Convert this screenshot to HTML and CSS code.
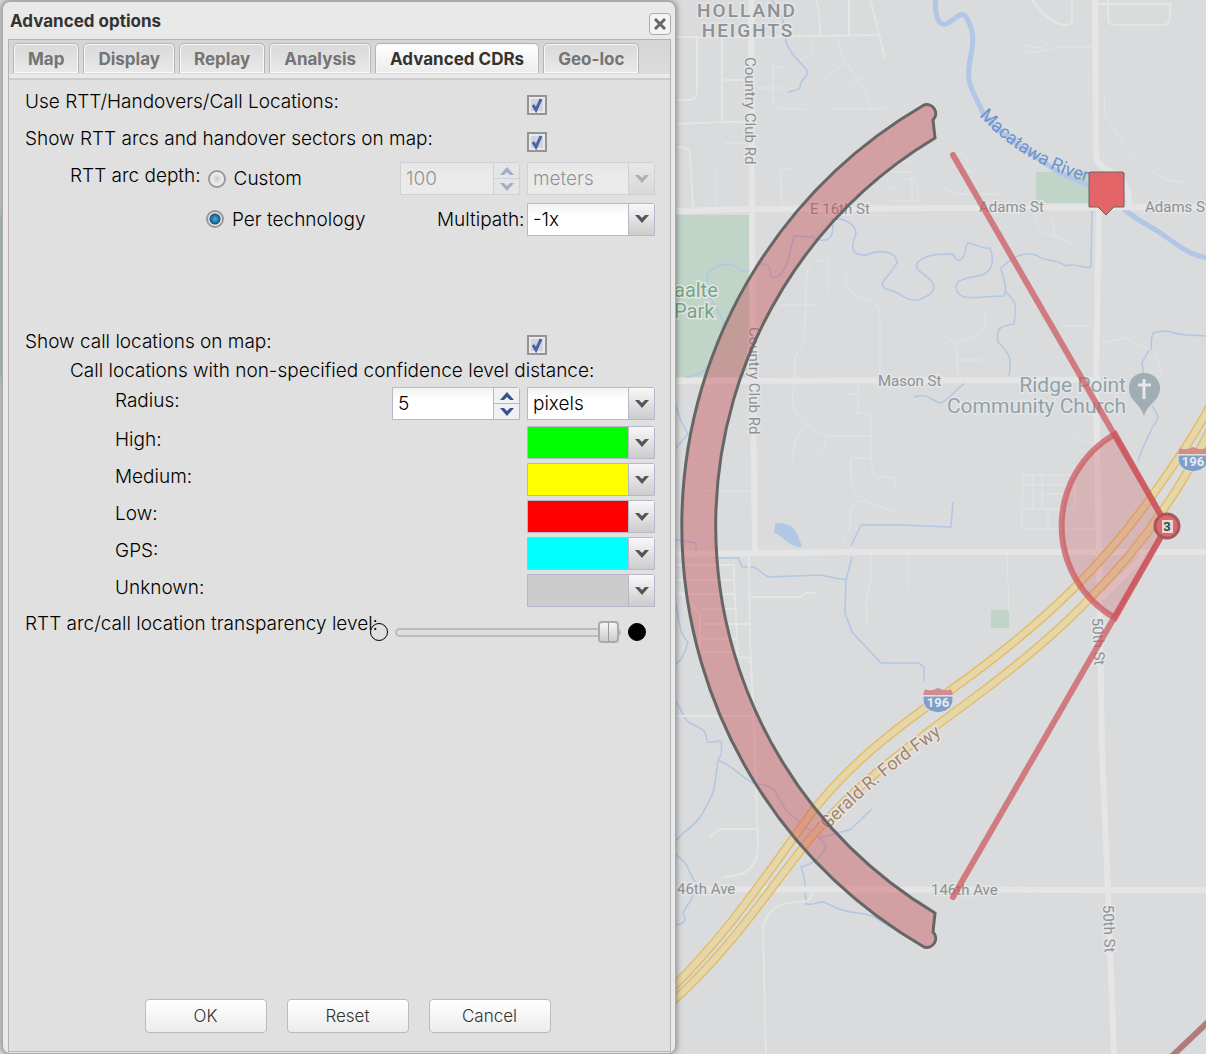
FILE: index.html
```
<!DOCTYPE html>
<html lang="en">
<head>
  <meta charset="UTF-8">
  <meta name="viewport" content="width=device-width, initial-scale=1.0">
  <title>Advanced options</title>
  <link rel="stylesheet" href="styles.css">
</head>
<body>
  <svg class="map" viewBox="0 0 1206 1054" preserveAspectRatio="xMinYMin slice" role="img" aria-label="Map">
    <!-- parks -->
    <g class="park">
      <path d="M0 215 H749 V377 H0z"/>
      <path d="M1036 172 H1100 V203 H1036z"/>
      <path d="M991 610 H1009 V628 H991z"/>
    </g>

    <!-- rivers and creeks -->
    <g class="water">
      <path class="river" d="M936 -4 C934 14 938 26 946 24 C956 20 960 10 966 17 C974 30 974 40 971 55 C967 75 968 82 974 94 L984 115 C1000 135 1030 152 1058 172 C1080 182 1105 190 1124 209 C1140 223 1152 226 1166 237 C1180 246 1190 256 1208 258"/>
      <path d="M772 0 L783 20 L786 42 C792 58 800 60 808 72 C806 80 800 78 800 88 C796 92 790 89 789 93"/>
      <path d="M707 292 V275 C712 267 722 264 732 264 C740 268 736 273 748 271 L760 264 C772 264 770 271 771 277 C780 280 787 268 790 252 L794 236 L812 237 C822 242 832 243 833 228 L832 219 C845 217 856 225 856 234 C850 248 852 256 866 255 C880 249 896 251 897 263 C890 276 876 284 886 289 C900 291 905 302 918 300 C930 296 938 290 932 282 C924 272 912 270 918 262 C926 254 940 254 953 254 C958 268 966 256 966 246 C970 238 978 250 990 248 C996 264 990 272 982 275 C970 278 952 278 957 291 C962 302 978 296 1004 296 C1008 285 1002 276 1001 268 C1014 256 1022 252 1036 255 C1044 262 1054 258 1066 266 C1076 262 1086 270 1091 267 L1092 211"/>
      <path d="M707 292 L724 322 L719 340 C712 370 700 376 686 377"/>
      <path d="M1006 292 C1018 304 1016 306 1014 324 C998 326 996 330 998 342 C1010 354 1012 358 1009 376"/>
      <path d="M914 397 C930 393 930 400 940 403 C950 400 952 392 965 383"/>
      <path d="M1151 350 C1152 330 1150 332 1168 331 C1180 336 1190 335 1208 336"/>
      <path d="M1149 350 L1142 363 L1144 378 M1152 406 C1160 418 1160 416 1152 428 L1142 450 L1138 461"/>
      <path d="M676 406 C680 420 681 422 688 434 L676 448 M676 540 L696 543 V550"/>
      <path d="M851 546 L861 525 L900 525 L951 527 L953 502 M718 558 H738 L742 567 H754 L768 577 L820 575 L840 579 H846 M852 557 L846 580 L845 613 L852 632 L881 663 H918 L924 667 V681"/>
      <path d="M676 604 C680 628 680 634 688 642 C684 655 682 660 676 664 M676 702 C684 712 682 718 690 723 C704 730 706 730 707 742 C714 744 720 738 722 743 C720 752 724 752 718 760 C714 790 716 790 702 814 C694 828 684 830 676 841"/>
      <path d="M718 760 C740 770 740 778 756 784 C780 784 776 800 788 812 C806 828 820 836 826 846 C820 860 812 864 801 867 C805 876 805 884 806 904 C818 906 818 898 830 905 C850 916 860 910 876 918 L892 928 M820 838 C834 834 846 830 850 830 L872 809"/>
      <path d="M676 855 C690 864 688 872 695 882 C696 900 686 904 683 913 C688 922 682 924 676 925"/>
      <path class="pond" d="M776 524 C794 523 796 532 801 546 C796 548 790 542 775 532z"/>
    </g>

    <!-- side streets -->
    <g class="street">
      <path class="wide" d="M676 37 H752 L879 35 M676 124 L722 122 H752 M697 37 V92 Q697 100 690 100 H676 M722 38 V122 M816 0 Q820 10 820 34 M849 0 V35 M870 0 Q876 20 879 35 L885 58 M724 80 H752 M676 147 Q690 146 690 156 L693 207 M1029 -4 C1044 16 1052 24 1066 25 Q1072 25 1072 18 V0 M1098 4 H1170 V18 Q1170 25 1162 25 H1114 Q1108 25 1108 18 V0"/>
      <path d="M773 62 V100 Q773 109 782 109 H805 M773 67 H786 M757 88 H783 M833 109 H875 L892 106 M838 38 Q840 56 850 68 Q870 95 871 108 M825 84 Q826 74 844 64 M850 87 L868 74 M716 167 V205 M724 143 H748 M782 205 L780 169 H793 M800 60 L812 55 V38 M1020 48 C1026 40 1034 52 1044 46 M1020 48 C1026 56 1040 52 1054 48 M1054 47 H1092 M1044 37 L1048 47"/>
      <path d="M800 350 L804 340 C806 310 806 300 806 285 C806 264 812 260 828 260 V292 M780 305 H816 M848 272 C840 284 850 290 858 298 C880 298 880 310 880 320 V376 M884 172 H912 V204 M890 130 C880 150 900 160 914 164 M884 190 Q898 190 904 180 Q916 174 918 190 V201 H890 M955 155 Q970 152 968 172 L976 170 M941 184 Q946 193 960 194 H1000 M1035 215 Q1036 236 1056 236 M1052 217 L1055 236 Q1078 244 1082 254 M1105 97 Q1102 112 1110 122 Q1130 160 1166 180 L1187 182 M1100 118 L1107 116 M1060 326 H1092 M1100 343 L1126 338 L1150 350 M941 333 L956 344 Q982 335 985 325 V313 M956 344 L958 376"/>
      <path d="M799 350 L795 358 V382 C790 404 792 410 806 424 C822 434 824 436 830 436 H871 M806 424 Q792 438 792 462 M827 436 Q826 444 820 454 M858 384 V414 M845 394 H858 M852 415 Q860 411 871 415 V458 Q872 477 877 477 H894 C896 492 896 492 901 495 M871 458 H851 V477 C852 490 858 494 860 500 M852 550 L843 542 Q842 536 850 530 V510 Q856 499 866 501 L896 513 M871 555 V580 L866 600 L867 624 M908 555 V588 M700 491 H750"/>
      <path d="M1023 475 H1075 V509 H1022z M1022 485 H1075 M1033 475 V509 M1042 475 V509 M1042 494 H1075 M1022 509 V529 H1096 M1048 509 V529 M1068 426 Q1080 444 1098 443 M1007 555 L1009 612 M1154 350 L1162 372 L1156 382 M956 360 H983"/>
      <path class="wide" d="M676 565 H734 V580 L738 657 L752 658 M676 580 H735 M676 594 H735 M700 609 H736 M702 624 H750 M702 639 H738 M702 652 H738 M749 556 L750 640 L755 750 L758 846 Q758 866 742 874 L722 878 M676 591 Q688 596 700 615 V650 M751 597 H800 L806 593 H816 M676 716 H752 M710 837 L720 829 H757 M813 891 Q812 902 800 902 Q764 902 763 932 L766 1056"/>
    </g>

    <!-- main roads -->
    <g class="road">
      <path d="M676 211 L752 209 L1206 207 M676 381 L1100 380 M676 554 L860 552 L1206 552 M676 889 L1206 890"/>
      <path d="M751 0 L753 380 L755 552"/>
      <path d="M1095 0 L1096 155 C1098 176 1128 166 1130 206 M1099 206 L1096 380 L1099 560 L1102 750 L1108 890 L1114 1056"/>
      <path d="M1097 602 L1144 556"/>
    </g>

    <!-- freeway, two carriageways -->
    <g class="freeway">
      <path class="edge" d="M1210 406 C1190 444 1170 470 1154 493 C1130 528 1104 558 1074 588 C1040 622 1000 655 948 692 C890 732 850 765 816 807 C775 862 730 932 672 988"/>
      <path class="edge" d="M1210 430 C1196 458 1180 486 1163 510 C1142 542 1118 570 1091 597 C1056 634 1014 668 971 700 C900 752 850 790 809 840 C765 895 730 950 672 1002"/>
      <path d="M1210 406 C1190 444 1170 470 1154 493 C1130 528 1104 558 1074 588 C1040 622 1000 655 948 692 C890 732 850 765 816 807 C775 862 730 932 672 988"/>
      <path d="M1210 430 C1196 458 1180 486 1163 510 C1142 542 1118 570 1091 597 C1056 634 1014 668 971 700 C900 752 850 790 809 840 C765 895 730 950 672 1002"/>
    </g>

    <!-- interstate shields -->
    <g id="shield">
      <path fill="#7f9fcb" stroke="#e3e6ea" stroke-width="1" d="M923 696 Q921 711 938 713 Q955 711 953 696z"/>
      <path fill="#d38b8f" d="M925 689 Q930 692 938 688 Q946 692 951 689 L953 695 H923z"/>
      <text class="shield-text" x="938" y="707">196</text>
    </g>
    <use href="#shield" x="255" y="-241"/>

    <!-- labels -->
    <g class="label">
      <text class="area" x="747" y="17">HOLLAND</text>
      <text class="area" x="748" y="37">HEIGHTS</text>
      <text class="green" x="674" y="297">aalte</text>
      <text class="green" x="674" y="318">Park</text>
      <text transform="translate(745 57) rotate(90)">Country Club Rd</text>
      <text transform="translate(749 327) rotate(90)">Country Club Rd</text>
      <text x="810" y="214">E 16th St</text>
      <text x="979" y="212">Adams St</text>
      <text x="1145" y="212">Adams St</text>
      <text x="878" y="386">Mason St</text>
      <text x="677" y="894">46th Ave</text>
      <text x="931" y="895">146th Ave</text>
      <text transform="translate(1092 618) rotate(87)">50th St</text>
      <text transform="translate(1103 905) rotate(88)">50th St</text>
      <text class="place" x="1126" y="392">Ridge Point</text>
      <text class="place" x="1126" y="413">Community Church</text>
      <path id="riverText" fill="none" d="M979 116 Q1030 170 1100 185"/>
      <text class="river-text"><textPath href="#riverText">Macatawa River</textPath></text>
      <path id="fwyText" fill="none" d="M828 830 Q880 775 960 722"/>
      <text class="fwy-text"><textPath href="#fwyText">Gerald R. Ford Fwy</textPath></text>
    </g>

    <!-- church pin -->
    <path fill="#a1adb4" d="M1144 373 C1134 373 1129 380 1129 388 C1129 401 1140 403 1144 416 C1148 403 1160 401 1160 388 C1160 380 1154 373 1144 373z"/>
    <path stroke="#e6e8e9" stroke-width="3" d="M1144 379 V399 M1138 385 H1151"/>

    <!-- RTT arc and handover sector -->
    <path class="arc" d="M924 105 A487 487 0 0 0 924 947 A9 9 0 0 0 933 932 L935 913 A452 452 0 0 1 935 138 L933 120 A9 9 0 0 0 924 105z"/>
    <path class="ray" d="M953 155 L1167 526 L953 897"/>
    <path class="sector" d="M1167 526 L1115 434 A106 106 0 0 0 1115 618z"/>
    <path stroke="#b07b7d" stroke-width="6" d="M1170 1058 L1210 1020"/>

    <!-- cell markers -->
    <circle cx="1167" cy="526" r="12" fill="#e86465" stroke="#a35a5e" stroke-width="3"/>
    <path fill="#ddd" d="M1162 520 H1173 V533 H1162z"/>
    <text class="marker-text" x="1167" y="531">3</text>
    <path fill="#e46567" stroke="#666" stroke-width="1" stroke-linejoin="round" d="M1090 172 H1123 L1124 173 V207 H1114 L1106 215 L1098 207 H1089 V173z"/>
  </svg>

  <main class="dialog">
    <header class="dialog-header">
      <h1>Advanced options</h1>
      <button class="close" type="button" aria-label="Close">
        <svg width="14" height="14" viewBox="0 0 14 14"><path d="M2 2 L12 12 M12 2 L2 12" stroke="#666" stroke-width="3"/></svg>
      </button>
    </header>

    <div class="panel">
      <nav class="tabs">
        <button type="button">Map</button>
        <button type="button">Display</button>
        <button type="button">Replay</button>
        <button type="button">Analysis</button>
        <button type="button" class="active">Advanced CDRs</button>
        <button type="button">Geo-loc</button>
      </nav>

      <form class="options">
        <div class="row">
          <label for="useRtt">Use RTT/Handovers/Call Locations:</label>
          <div class="field"><input type="checkbox" id="useRtt" checked></div>
        </div>
        <div class="row">
          <label for="showArcs">Show RTT arcs and handover sectors on map:</label>
          <div class="field"><input type="checkbox" id="showArcs" checked></div>
        </div>
        <div class="row indent">
          <span class="caption">RTT arc depth:</span>
          <div class="choice">
            <input type="radio" name="depth" id="custom">
            <label for="custom">Custom</label>
          </div>
          <div class="spinner narrow disabled">
            <input type="text" value="100" aria-label="Arc depth" disabled>
            <span class="steps">
              <button type="button" aria-label="Increase" disabled><svg width="14" height="8" viewBox="0 0 14 8"><path d="M0 8 L7 0 L14 8 H10 L7 5 L4 8z"/></svg></button>
              <button type="button" aria-label="Decrease" disabled><svg width="14" height="8" viewBox="0 0 14 8"><path d="M0 0 L7 8 L14 0 H10 L7 3 L4 0z"/></svg></button>
            </span>
          </div>
          <div class="combo disabled">
            <select aria-label="Arc depth unit" disabled><option>meters</option></select>
            <span class="arrow"></span>
          </div>
        </div>
        <div class="row indent technology">
          <div class="choice">
            <input type="radio" name="depth" id="perTechnology" checked>
            <label for="perTechnology">Per technology</label>
          </div>
          <label class="multipath" for="multipath">Multipath:</label>
          <div class="combo">
            <select id="multipath"><option>-1x</option></select>
            <span class="arrow"></span>
          </div>
        </div>

        <div class="row locations">
          <label for="showCalls">Show call locations on map:</label>
          <div class="field"><input type="checkbox" id="showCalls" checked></div>
        </div>
        <div class="row indent note">
          <span class="caption">Call locations with non-specified confidence level distance:</span>
        </div>
        <div class="row indent-2 radius">
          <label for="radius">Radius:</label>
          <div class="spinner">
            <input type="text" id="radius" value="5">
            <span class="steps">
              <button type="button" aria-label="Increase"><svg width="14" height="8" viewBox="0 0 14 8"><path d="M0 8 L7 0 L14 8 H10 L7 5 L4 8z"/></svg></button>
              <button type="button" aria-label="Decrease"><svg width="14" height="8" viewBox="0 0 14 8"><path d="M0 0 L7 8 L14 0 H10 L7 3 L4 0z"/></svg></button>
            </span>
          </div>
          <div class="combo">
            <select aria-label="Radius unit"><option>pixels</option></select>
            <span class="arrow"></span>
          </div>
        </div>
        <div class="row indent-2">
          <label for="high">High:</label>
          <div class="combo"><input type="color" id="high" value="#00ff00"><span class="arrow"></span></div>
        </div>
        <div class="row indent-2">
          <label for="medium">Medium:</label>
          <div class="combo"><input type="color" id="medium" value="#ffff00"><span class="arrow"></span></div>
        </div>
        <div class="row indent-2">
          <label for="low">Low:</label>
          <div class="combo"><input type="color" id="low" value="#ff0000"><span class="arrow"></span></div>
        </div>
        <div class="row indent-2">
          <label for="gps">GPS:</label>
          <div class="combo"><input type="color" id="gps" value="#00ffff"><span class="arrow"></span></div>
        </div>
        <div class="row indent-2">
          <label for="unknown">Unknown:</label>
          <div class="combo"><input type="color" id="unknown" value="#cccccc"><span class="arrow"></span></div>
        </div>
        <div class="row transparency">
          <label for="transparency">RTT arc/call location transparency level:</label>
          <div class="slider">
            <span class="dot"></span>
            <input type="range" id="transparency" min="0" max="100" value="100">
            <span class="dot filled"></span>
          </div>
        </div>
      </form>

      <footer class="actions">
        <button type="button">OK</button>
        <button type="button">Reset</button>
        <button type="button">Cancel</button>
      </footer>
    </div>
  </main>
</body>
</html>
```
FILE: styles.css
```
* {
  box-sizing: border-box;
}

body {
  margin: 0;
  min-height: 100vh;
  display: flex;
  padding: 1px 2px 0;
  background-color: #d9dbdd;
  font-family: Inter, "Open Sans", sans-serif;
  font-size: 19px;
  font-weight: 300;
  color: #000;
}

button, input, select {
  font: inherit;
  color: inherit;
  margin: 0;
}

/* Map */
.map {
  position: absolute;
  inset: 0;
  width: 100%;
  height: 100%;
}

.park { fill: #c0d5c8; }

.water path {
  fill: none;
  stroke: #b2c6e5;
  stroke-width: 1.5;
}

.water .river { stroke-width: 5; }

.water .pond {
  fill: #b2c6e5;
}

.street path {
  fill: none;
  stroke: #e4e5e5;
  stroke-width: 1;
}

.street .wide { stroke-width: 2; }

.road path {
  fill: none;
  stroke: #e5e5e5;
  stroke-width: 6;
}

.freeway path {
  fill: none;
  stroke: #e5d7aa;
  stroke-width: 6;
}

.freeway .edge {
  stroke: #e3bd68;
  stroke-width: 9;
}

.label text {
  font: 400 15px Roboto, sans-serif;
  fill: #8e9093;
  stroke: #e4e5e6;
  stroke-width: 3px;
  paint-order: stroke;
}

.label .area {
  font-size: 19px;
  font-weight: 500;
  letter-spacing: 2px;
  text-anchor: middle;
}

.label .green {
  font-size: 20px;
  fill: #73a884;
}

.label .place {
  font-size: 21px;
  fill: #92a1a9;
  text-anchor: end;
}

.label .river-text {
  font-size: 18px;
  fill: #6c93cc;
  stroke: none;
}

.label .fwy-text {
  font-size: 18px;
  fill: #a58469;
}

.shield-text, .marker-text {
  font: 700 13px Roboto, sans-serif;
  text-anchor: middle;
  fill: #e8ebef;
}

.marker-text { fill: #444; }

.arc {
  fill: rgba(200, 71, 78, 0.4);
  stroke: #666;
  stroke-width: 3;
}

.ray, .sector {
  fill: none;
  stroke: rgba(204, 82, 88, 0.7);
  stroke-width: 6;
  stroke-linecap: round;
}

.sector { fill: rgba(204, 82, 88, 0.28); }

/* Dialog */
.dialog {
  position: relative;
  flex: 0 1 674px;
  min-width: 0;
  display: flex;
  flex-direction: column;
  padding: 0 4px 1px 5px;
  background-color: #e9e9e9;
  border: 1px solid #aaa;
  border-radius: 8px;
  box-shadow: 0 0 6px rgba(0, 0, 0, 0.5);
}

.dialog-header {
  display: flex;
  justify-content: space-between;
  align-items: center;
  height: 37px;
  padding-left: 2px;
}

.dialog-header h1 {
  margin: 0;
  font-size: 17px;
  font-weight: 700;
  color: #333;
}

.close {
  display: grid;
  place-items: center;
  width: 22px;
  height: 22px;
  margin-top: 6px;
  padding: 0;
  border: 1px solid #aaa;
  border-radius: 4px;
  background-color: #f4f4f4;
}

.panel {
  flex: 1;
  display: flex;
  flex-direction: column;
  border: 1px solid #b9b0b2;
  background-color: #e0e0e0;
}

.tabs {
  display: flex;
  align-items: flex-end;
  gap: 4px;
  height: 40px;
  padding: 0 4px;
  border-bottom: 2px solid #ccc;
  background: linear-gradient(#d4d4d4, #dcdcdc 33px, #ccc 33px, #e9e9e9 34px);
}

.tabs button {
  height: 30px;
  margin-bottom: 5px;
  padding: 0 14px;
  border: 1px solid #b4b4b4;
  border-bottom: 0;
  border-radius: 5px 5px 0 0;
  background: linear-gradient(#d9d9d9, #e9e9e9);
  box-shadow: inset 0 0 0 1px #f8f8f8;
  font-size: 17px;
  font-weight: 700;
  color: #747474;
}

.tabs .active {
  background: linear-gradient(#fff, #ececec);
  color: #333;
}

/* Options form */
.options {
  padding: 6px 15px 0 16px;
}

.row {
  display: flex;
  align-items: center;
  gap: 7px;
  height: 37px;
  white-space: nowrap;
}

.row > label, .caption {
  flex: 1;
  min-width: 0;
  padding-bottom: 6px;
}

.indent { padding-left: 45px; }
.indent-2 { padding-left: 90px; }

.indent > .caption { flex: none; }

.field {
  display: flex;
  width: 128px;
}

.choice {
  display: flex;
  align-items: center;
  flex: 1;
  gap: 8px;
}

.technology {
  height: 44px;
  padding-left: 181px;
}

.technology .multipath {
  flex: none;
  width: 83px;
  padding: 0;
}

.locations { margin-top: 85px; }
.note { height: 20px; }
.radius { height: 41px; }

input[type="checkbox"] {
  appearance: none;
  width: 20px;
  height: 20px;
  border: 2px solid #949494;
  background: #e8e9ec url("data:image/svg+xml,%3Csvg xmlns='http://www.w3.org/2000/svg' viewBox='0 0 16 16'%3E%3Cpath d='M2 2h12v12H2z' fill='%23cfd3dc'/%3E%3Cpath d='M4 8l3 5 5-11' fill='none' stroke='%234a62a3' stroke-width='3'/%3E%3C/svg%3E");
}

input[type="radio"] {
  appearance: none;
  width: 18px;
  height: 18px;
  border: 2px solid #999;
  border-radius: 50%;
  background: radial-gradient(#ccc, #f4f4f4 70%);
}

input[type="radio"]:checked {
  background: radial-gradient(circle at 50% 50%, #3cb5e8 0, #1b5481 5px, #e4e4e4 6px);
}

.combo, .spinner {
  display: flex;
  flex: none;
  width: 128px;
  height: 33px;
  border: 1px solid #b5b8c8;
  border-radius: 0 3px 0 0;
  background: linear-gradient(#f0f3f3, #fff 12px);
}

.narrow { width: 120px; }

.combo select, .combo input, .spinner input {
  appearance: none;
  flex: 1;
  min-width: 0;
  height: 31px;
  padding: 0 5px;
  border: 0;
  border-radius: 0;
  background: none;
  opacity: 1;
}

.combo input[type="color"] { padding: 0; }

input[type="color"]::-webkit-color-swatch-wrapper { padding: 0; }

input[type="color"]::-webkit-color-swatch {
  border: 0;
  border-radius: 0;
}

.arrow {
  width: 26px;
  border-left: 1px solid #b5b8c8;
  background: url("data:image/svg+xml,%3Csvg xmlns='http://www.w3.org/2000/svg' viewBox='0 0 14 8'%3E%3Cpath d='M0 0h4l3 3 3-3h4L7 8z' fill='%23555'/%3E%3C/svg%3E") center / 14px 8px no-repeat, linear-gradient(#f8f8f8, #ccc);
  pointer-events: none;
}

.steps {
  display: flex;
  flex-direction: column;
  width: 26px;
  border-left: 1px solid #b5b8c8;
}

.steps button {
  flex: 1;
  display: grid;
  place-items: center;
  padding: 0;
  border: 0;
  background: #f1f1f4;
}

.steps button + button { border-top: 1px solid #b5b8c8; }
.steps path { fill: #34528f; }

.disabled { opacity: 0.35; }

.transparency {
  align-items: flex-start;
}

.transparency label {
  padding-top: 3px;
}

.slider {
  display: flex;
  flex: none;
  align-items: center;
  gap: 7px;
  width: 285px;
  padding-top: 12px;
}

.dot {
  flex: none;
  width: 18px;
  height: 18px;
  border: 1px solid #000;
  border-radius: 50%;
}

.filled { background-color: #000; }

input[type="range"] {
  appearance: none;
  width: 226px;
  height: 22px;
  background: none;
}

input[type="range"]::-webkit-slider-runnable-track {
  height: 9px;
  border: 2px solid #bbb;
  border-radius: 5px;
  background-color: #ddd;
}

input[type="range"]::-webkit-slider-thumb {
  appearance: none;
  width: 21px;
  height: 22px;
  margin-top: -9px;
  border: 2px solid #aaa;
  border-radius: 4px;
  background: linear-gradient(90deg, transparent 8px, #999 8px, #999 9px, transparent 9px), linear-gradient(#f6f6f6, #ccc);
}

/* Footer buttons */
.actions {
  display: flex;
  justify-content: center;
  gap: 20px;
  margin-top: auto;
  padding: 16px 0 18px 16px;
}

.actions button {
  width: 122px;
  height: 34px;
  border: 1px solid #bbb;
  border-radius: 4px;
  background: linear-gradient(#fff, #ececec);
  font-size: 17px;
  color: #333;
}
```
